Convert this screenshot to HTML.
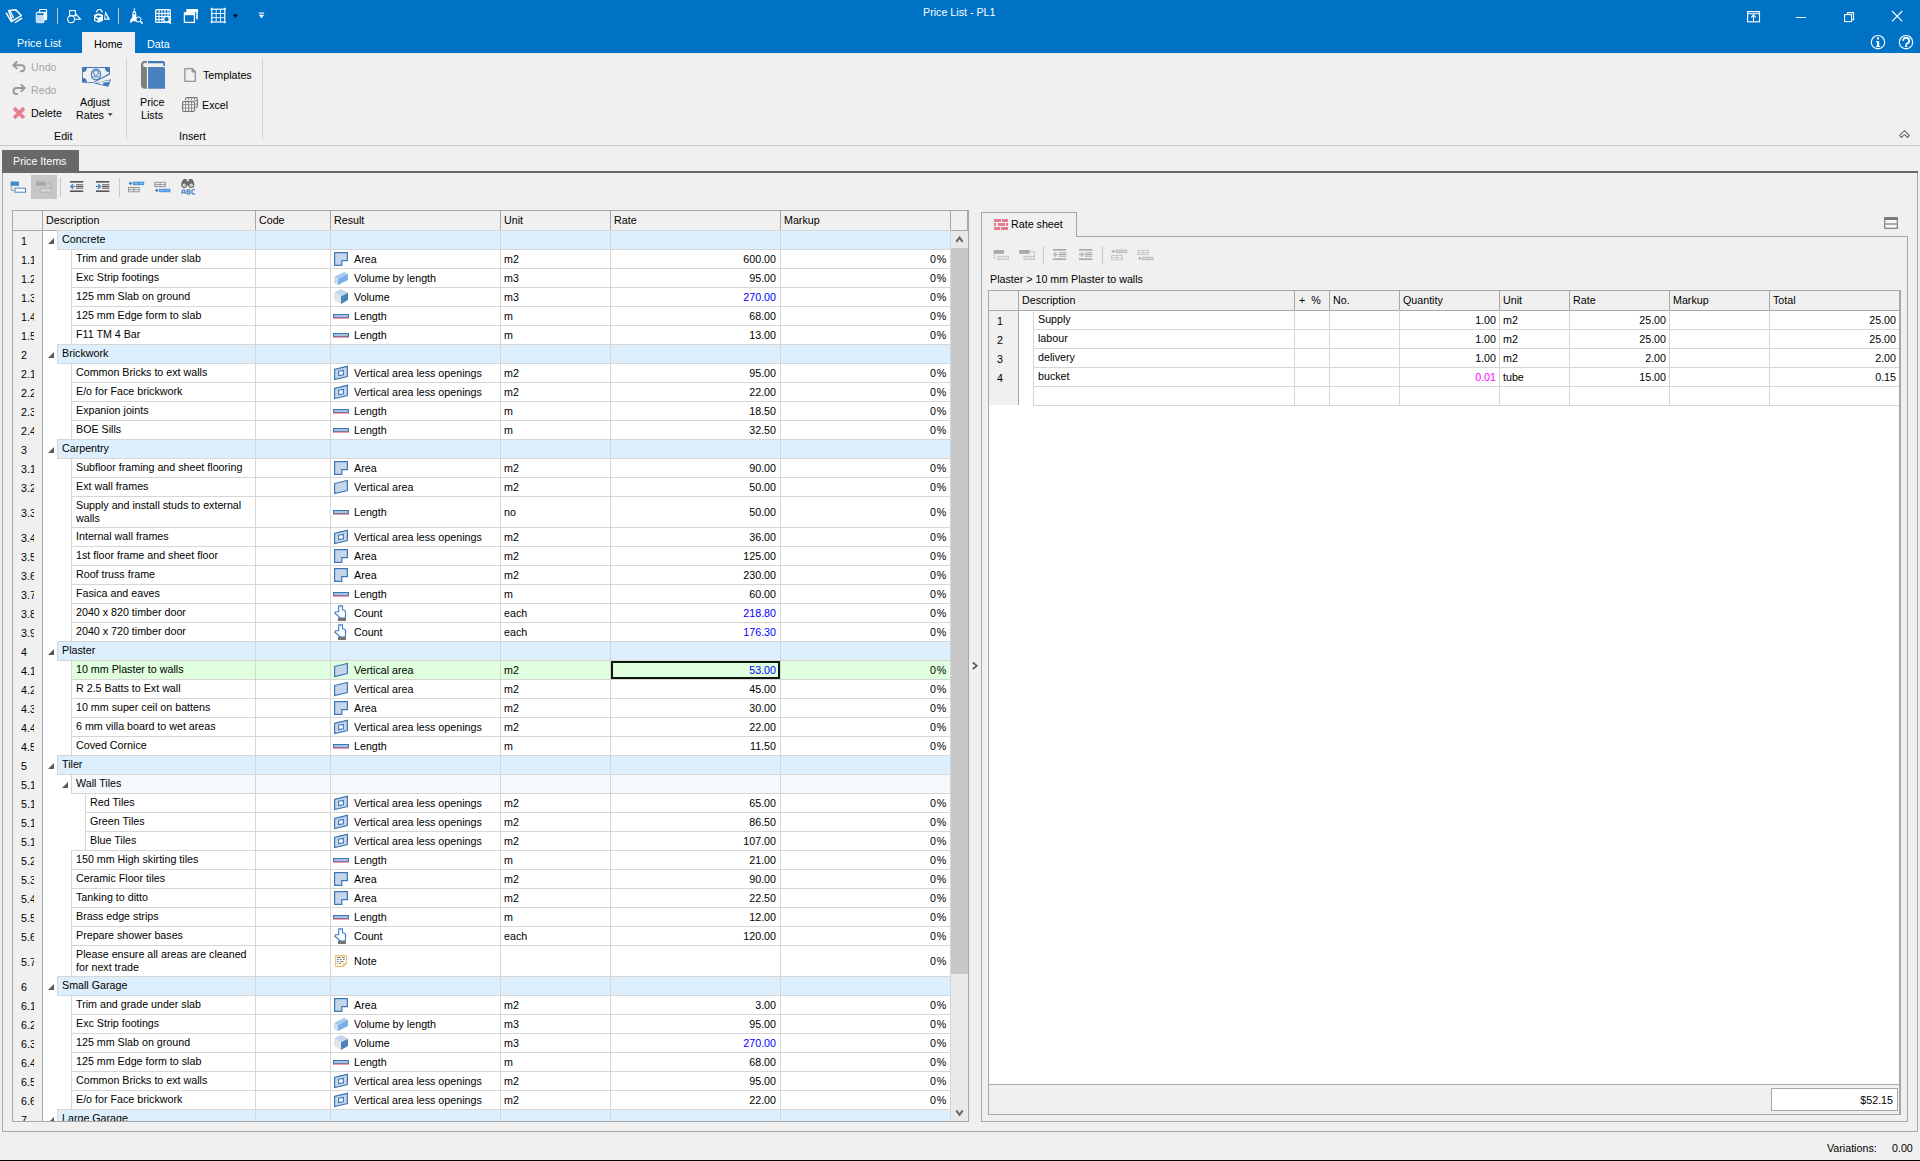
<!DOCTYPE html>
<html><head><meta charset="utf-8"><title>Price List - PL1</title>
<style>
html,body{margin:0;padding:0;}
body{width:1920px;height:1161px;position:relative;overflow:hidden;background:#f0f0f0;font-family:"Liberation Sans", sans-serif;font-size:10.7px;color:#000000;}
svg.bg{position:absolute;left:0;top:0;}
.t{position:absolute;white-space:nowrap;line-height:13px;}
</style></head><body>
<svg class="bg" width="1920" height="1161" viewBox="0 0 1920 1161" shape-rendering="crispEdges">
<rect x="0" y="0" width="1920" height="1161" fill="#f0f0f0" />
<rect x="0" y="0" width="1920" height="53" fill="#0072c6" />
<g shape-rendering="geometricPrecision"><g fill="none" stroke="#fff" stroke-linecap="round" stroke-linejoin="round"><path d="M8.6,10.6 L15.8,9.8 L21.3,15.6 L12.2,21.1 Z" stroke-width="1.5"/><path d="M10.3,11.2 L13.3,17.6" stroke-width="1.3"/><path d="M6.4,13.4 L11.4,21.6" stroke-width="1.5"/><path d="M15.3,22.5 L21.6,18.4" stroke-width="1.4"/></g></g>
<g shape-rendering="geometricPrecision"><rect x="39.6" y="9.5" width="7" height="10.2" rx="0.8" fill="none" stroke="#fff" stroke-width="1.1"/><rect x="36.2" y="12.3" width="7.8" height="10.4" rx="1" fill="#bcdcfa" stroke="#e6f2ff" stroke-width="0.9"/><rect x="36.8" y="13.4" width="6.6" height="1.6" fill="#0a66b8"/><rect x="44" y="11.8" width="2.7" height="8" fill="#fff"/></g>
<rect x="57" y="8" width="1" height="16" fill="#cdc3b6" />
<g shape-rendering="geometricPrecision"><g fill="none" stroke="#fff" stroke-width="1.1"><rect x="69.6" y="10.6" width="5.8" height="5.2"/><circle cx="71.1" cy="19.2" r="3.4"/><path d="M75.5,13.6 L80.5,19.3 L75,19.3"/></g></g>
<g shape-rendering="geometricPrecision"><path d="M96.4,12.4 a2.9,3 0 0 1 5.8,0.2" fill="none" stroke="#fff" stroke-width="1.2"/><path d="M105.3,11 L110.2,19.7 L104,19.7 Z" fill="#fff"/><path d="M105.6,14.3 L107.9,18.4 L105.2,18.4 Z" fill="#0072c6"/><path d="M94,15 L98.5,13.2 L103,15 L103,20.8 L98.5,22.8 L94,20.8 Z" fill="#fff"/><path d="M95.6,16.4 L98.5,15.2 L101.4,16.4 L98.5,17.7 Z M95.3,17.8 L97.6,18.9 V21.3 L95.3,20.2 Z" fill="#0072c6"/></g>
<rect x="118" y="8" width="1" height="16" fill="#cdc3b6" />
<g shape-rendering="geometricPrecision"><path d="M134.3,8 L135.6,9.6 H133 Z" fill="#fff"/><path d="M134.3,10.2 C135.8,11.2 136.3,12.8 136.3,15 V17.5 L137.6,19.5 L137.3,22.8 L135.8,21.2 H132.8 L131.2,22.8 L129.8,22.5 L130.6,19.3 L132.3,17.5 V15 C132.3,12.8 132.8,11.2 134.3,10.2 Z" fill="#fff"/><circle cx="134.3" cy="13.4" r="0.9" fill="#0072c6"/><circle cx="138.5" cy="19.4" r="2.5" fill="#0072c6" stroke="#fff" stroke-width="1"/><path d="M140.3,21.3 L142.6,23.6" stroke="#fff" stroke-width="1.5"/></g>
<g shape-rendering="geometricPrecision"><rect x="155.7" y="9.6" width="14.6" height="12.8" rx="1" fill="none" stroke="#fff" stroke-width="1.3"/><path d="M155.7,13.5 H170.3 M155.7,16.5 H170.3 M155.7,19.5 H165 M159,10 V22.4 M162,10 V22.4 M165,10 V22.4 M168,10 V16.5" stroke="#fff" stroke-width="1.1" fill="none"/><circle cx="166.5" cy="19.2" r="2.8" fill="#0072c6" stroke="#fff" stroke-width="1.2"/><path d="M168.5,21.3 L170.8,23.7" stroke="#fff" stroke-width="1.4"/></g>
<g shape-rendering="geometricPrecision"><rect x="186.3" y="9" width="11.5" height="3.2" fill="#fff"/><rect x="196.2" y="9" width="1.6" height="10.4" fill="#fff"/><rect x="184.4" y="12.8" width="10" height="9.6" fill="none" stroke="#fff" stroke-width="1.3"/><rect x="184.4" y="12.8" width="10" height="2.4" fill="#fff"/></g>
<g shape-rendering="geometricPrecision"><g stroke="#fff" fill="none" stroke-width="1.2"><rect x="211.8" y="9.2" width="13" height="12.8"/><path d="M216.2,9.2 V22 M220.5,9.2 V22 M211.8,13.5 H224.8 M211.8,17.7 H224.8" stroke-width="0.9"/><path d="M211.8,7.8 V9.2 M224.8,7.8 V9.2 M211.8,22 V23.3 M224.8,22 V23.3 M210.5,9.2 H211.8 M224.8,9.2 H226 M210.5,22 H211.8 M224.8,22 H226"/></g></g>
<g shape-rendering="geometricPrecision"><path d="M232.8,14.6 L238,14.6 L235.4,17.8 Z" fill="#000"/></g>
<g shape-rendering="geometricPrecision"><rect x="258.8" y="12.5" width="5.4" height="1.1" fill="#fff"/><path d="M258.8,14.8 L264.2,14.8 L261.5,18.2 Z" fill="#fff"/></g>
<g shape-rendering="geometricPrecision"><rect x="1747.6" y="11.6" width="11.9" height="10.2" fill="none" stroke="#fff" stroke-width="1.15"/><path d="M1747.6,13.7 H1759.5" stroke="#fff" stroke-width="1"/><path d="M1753.5,21.8 V14.8 M1751.2,17.3 L1753.5,14.9 L1755.8,17.3" fill="none" stroke="#fff" stroke-width="1.1"/></g>
<rect x="1796" y="17" width="10" height="1" fill="#fff" />
<g shape-rendering="geometricPrecision"><path d="M1847.6,14 V12.6 H1853.6 V19.6 H1852" fill="none" stroke="#fff" stroke-width="1.05"/><rect x="1844.6" y="14.6" width="7" height="7" fill="none" stroke="#fff" stroke-width="1.05"/></g>
<g shape-rendering="geometricPrecision"><path d="M1892,11 L1902.3,21.3 M1902.3,11 L1892,21.3" stroke="#fff" stroke-width="1.1"/></g>
<g shape-rendering="geometricPrecision"><circle cx="1878" cy="42.2" r="6.7" fill="none" stroke="#fff" stroke-width="1.2"/><circle cx="1878" cy="38.5" r="1.15" fill="#fff"/><rect x="1877" y="41.2" width="2.2" height="5.6" fill="#fff"/><rect x="1876" y="41.2" width="1.5" height="1.1" fill="#fff"/><rect x="1876" y="46" width="4.2" height="1.1" fill="#fff"/></g>
<g shape-rendering="geometricPrecision"><circle cx="1906" cy="42.2" r="6.7" fill="none" stroke="#fff" stroke-width="1.2"/><path d="M1903,40.8 a3.1,3 0 1 1 5.4,2 c-0.9,0.7 -2.3,1 -2.3,2" fill="none" stroke="#fff" stroke-width="1.9"/><rect x="1905" y="45.3" width="2.1" height="1.7" fill="#fff"/></g>
<rect x="82" y="32" width="53" height="21" fill="#f0f0f0" />
<g shape-rendering="geometricPrecision"><path d="M14,65.2 H21.5 a3,3 0 0 1 0,6 H20" fill="none" stroke="#9a9a9a" stroke-width="1.9"/><path d="M17.2,61.5 L13.3,65.2 L17.2,68.9" fill="none" stroke="#9a9a9a" stroke-width="1.9"/></g>
<g shape-rendering="geometricPrecision"><path d="M24,88 H16.5 a3,3 0 0 0 0,6 H18" fill="none" stroke="#9a9a9a" stroke-width="1.9"/><path d="M20.8,84.3 L24.7,88 L20.8,91.7" fill="none" stroke="#9a9a9a" stroke-width="1.9"/></g>
<g shape-rendering="geometricPrecision"><path d="M14,108.2 L24,118 M24,108.2 L14,118" stroke="#e5818f" stroke-width="3.8"/></g>
<g shape-rendering="geometricPrecision"><path d="M82.8,67 H109.2 a0.8,0.8 0 0 1 0.8,0.8 V74.4 L93.9,82.8 H82.8 a0.8,0.8 0 0 1 -0.8,-0.8 V67.8 a0.8,0.8 0 0 1 0.8,-0.8 Z" fill="#4079ba"/><path d="M86.9,68.1 H105 A4,4 0 0 0 109,72.1 V73.6 L93.6,81.9 H86.9 A4,4 0 0 0 82.9,77.9 V72.1 A4,4 0 0 0 86.9,68.1 Z" fill="#f0f0f0"/><ellipse cx="96" cy="74.5" rx="4.6" ry="5.4" fill="none" stroke="#4079ba" stroke-width="1.2"/><circle cx="96" cy="73" r="2.4" fill="none" stroke="#4079ba" stroke-width="1"/><path d="M93.4,76.3 Q96,78.3 98.6,76.3" fill="none" stroke="#4079ba" stroke-width="1"/><path d="M93.8,83.6 L111,79.2 L108.4,86.8 Z" fill="#4079ba"/><path d="M96.8,83.1 L109.6,80.3 L109.1,82 L103.8,82.6 L102.4,84.7 Z" fill="#f0f0f0"/></g>
<g shape-rendering="geometricPrecision"><path d="M108,113.3 L112.6,113.3 L110.3,116 Z" fill="#333"/></g>
<rect x="126" y="59" width="1" height="80" fill="#d0d0d0" />
<g shape-rendering="geometricPrecision"><path d="M146.9,61 H145 a4,4 0 0 0 -4,4 V84.7 a4,4 0 0 0 4,4 H146.9 Z" fill="#7f7f7f"/><path d="M147,63.1 H145 a2,2 0 0 0 0,4 H147 Z" fill="#f0f0f0"/><path d="M148.1,61 H162.5 a2.5,2.5 0 0 1 2.5,2.5 V66 H163.3 V63.2 H148.1 Z" fill="#3f77b8"/><path d="M148.1,67 H163.5 a1.5,1.5 0 0 1 1.5,1.5 V88.8 H148.1 Z" fill="#4a80bd"/></g>
<g shape-rendering="geometricPrecision"><path d="M184.9,68.8 H192.4 L195.3,71.7 V81.3 H184.9 Z" fill="#f0f0f0" stroke="#7a7a7a" stroke-width="1.05"/><path d="M192.2,68.8 V71.9 H195.3" fill="none" stroke="#7a7a7a" stroke-width="1"/></g>
<g shape-rendering="geometricPrecision"><rect x="185.7" y="97.7" width="11.6" height="9.6" rx="1.3" fill="#fff" stroke="#7a7a7a" stroke-width="1.25"/><path d="M188.7,97.7 V107.3 M191.6,97.7 V107.3 M194.5,97.7 V107.3 M185.7,100.9 H197.3 M185.7,104.1 H197.3" stroke="#7a7a7a" stroke-width="0.9"/><rect x="182.6" y="101.6" width="12" height="9.7" rx="1.3" fill="#fff" stroke="#f0f0f0" stroke-width="2.6"/><rect x="182.6" y="101.6" width="12" height="9.7" rx="1.3" fill="#fff" stroke="#7a7a7a" stroke-width="1.25"/><path d="M185.6,101.6 V111.3 M188.6,101.6 V111.3 M191.6,101.6 V111.3 M182.6,104.8 H194.6 M182.6,108 H194.6" stroke="#7a7a7a" stroke-width="0.9"/></g>
<rect x="262" y="59" width="1" height="80" fill="#d0d0d0" />
<g shape-rendering="geometricPrecision"><path d="M1904.5,130.7 L1909.3,135.5 L1907.5,137.3 L1904.5,134.3 L1901.5,137.3 L1899.7,135.5 Z" fill="#fff" stroke="#6a6a6a" stroke-width="1.1" stroke-linejoin="round"/></g>
<rect x="0" y="145" width="1920" height="1" fill="#c8c8c8" />
<rect x="2" y="150" width="77" height="21" fill="#686868" />
<rect x="2" y="171" width="1916" height="2" fill="#686868" />
<rect x="2" y="173" width="1" height="959" fill="#a8a8a8" />
<rect x="1917" y="173" width="1" height="959" fill="#a8a8a8" />
<rect x="2" y="1131" width="1916" height="1" fill="#a8a8a8" />
<rect x="31" y="175" width="26" height="24" fill="#c6c6c6" />
<g shape-rendering="geometricPrecision"><rect x="10.5" y="181.5" width="8.5" height="4.3" fill="#4a86c8"/><path d="M11.3,185.8 V190.3 H14.5" fill="none" stroke="#8c8c8c" stroke-width="0.9"/><rect x="15" y="188.2" width="10.5" height="4" fill="#fff" stroke="#4a86c8" stroke-width="1"/></g>
<g shape-rendering="geometricPrecision"><rect x="36" y="181.5" width="9.5" height="4.3" fill="#a8a8a8"/><path d="M45.5,183.6 H51 V188" fill="none" stroke="#b4b4b4" stroke-width="0.9"/><rect x="40.3" y="188.5" width="10.8" height="3.7" fill="#d5d5d5" stroke="#b4b4b4" stroke-width="1"/></g>
<rect x="60" y="178" width="1" height="19" fill="#c8c8c8" />
<g shape-rendering="geometricPrecision"><rect x="70" y="181" width="13.3" height="1.6" fill="#565656"/><rect x="70" y="190.4" width="13.3" height="1.6" fill="#565656"/><path d="M76,184.8 H83.3 M76,186.5 H83.3 M76,188.2 H83.3" stroke="#565656" stroke-width="1"/><path d="M75.3,186.5 H70.8 M73,184.3 L70.8,186.5 L73,188.7" fill="none" stroke="#4a86c8" stroke-width="1.3"/></g>
<g shape-rendering="geometricPrecision"><rect x="96" y="181" width="13.3" height="1.6" fill="#565656"/><rect x="96" y="190.4" width="13.3" height="1.6" fill="#565656"/><path d="M102,184.8 H109.3 M102,186.5 H109.3 M102,188.2 H109.3" stroke="#565656" stroke-width="1"/><path d="M96,186.5 H100.5 M98.3,184.3 L100.5,186.5 L98.3,188.7" fill="none" stroke="#4a86c8" stroke-width="1.3"/></g>
<rect x="119" y="178" width="1" height="19" fill="#c8c8c8" />
<g shape-rendering="geometricPrecision"><path d="M128.8,183.4 H132 M130.4,181.8 V185" stroke="#3d7fc8" stroke-width="1.3"/><rect x="133.2" y="182.1" width="10.6" height="2.6" fill="#6cb6f5" stroke="#3d7fc8" stroke-width="0.8"/><path d="M138.5,182.1 V184.7" stroke="#3d7fc8" stroke-width="0.6"/><rect x="128.6" y="187.4" width="10.6" height="4.4" fill="none" stroke="#8c8c8c" stroke-width="0.9"/><path d="M128.6,189.6 H139.2 M133.9,187.4 V191.8" stroke="#8c8c8c" stroke-width="0.8"/></g>
<g shape-rendering="geometricPrecision"><rect x="154.9" y="182.3" width="10.4" height="4.3" fill="none" stroke="#8c8c8c" stroke-width="0.9"/><path d="M154.9,184.5 H165.3 M160.1,182.3 V186.6" stroke="#8c8c8c" stroke-width="0.8"/><path d="M155.2,190.4 H158.4 M156.8,188.8 V192" stroke="#3d7fc8" stroke-width="1.3"/><rect x="159.6" y="189.2" width="10.3" height="2.6" fill="#6cb6f5" stroke="#3d7fc8" stroke-width="0.8"/><path d="M164.8,189.2 V191.8" stroke="#3d7fc8" stroke-width="0.6"/></g>
<g shape-rendering="geometricPrecision"><path d="M181.3,185.5 C181.3,182.3 182.3,179.6 184.2,179 H186.8 V181.2 H188.8 V179 H191.4 C193.3,179.6 194.3,182.3 194.3,185.5" fill="#6a6a6a"/><circle cx="184.2" cy="185" r="2.9" fill="#6a6a6a"/><circle cx="191.3" cy="185" r="2.9" fill="#6a6a6a"/><circle cx="184.2" cy="185.2" r="1.6" fill="#e6e6e6"/><circle cx="191.3" cy="185.2" r="1.6" fill="#e6e6e6"/><path d="M184.9,184.6 L183.9,185.6 M192,184.6 L191,185.6" stroke="#6a6a6a" stroke-width="0.7"/></g>
<g shape-rendering="geometricPrecision"><g fill="none" stroke="#3d78c0" stroke-width="1.1" stroke-linejoin="miter"><path d="M182.1,194 V191 L183.3,189.7 H184.1 L185.1,191 V194 M182.1,192.3 H185.1"/><path d="M187.1,194 V189.7 H189.2 L189.9,190.3 V191.1 L189.2,191.8 H187.1 M189.2,191.8 L190.1,192.5 V193.3 L189.4,193.9 H187.1"/><path d="M195,189.7 H192.8 L191.9,190.6 V193 L192.8,193.9 H195"/></g></g>
<rect x="12" y="210" width="956" height="911" fill="#ffffff" />
<rect x="12" y="210" width="956" height="20" fill="#f0f0f0" />
<rect x="12" y="210" width="957" height="1" fill="#a8a8a8" />
<rect x="12" y="230" width="957" height="1" fill="#a8a8a8" />
<rect x="42" y="210" width="1" height="20" fill="#a8a8a8" />
<rect x="255" y="210" width="1" height="20" fill="#a8a8a8" />
<rect x="330" y="210" width="1" height="20" fill="#a8a8a8" />
<rect x="500" y="210" width="1" height="20" fill="#a8a8a8" />
<rect x="610" y="210" width="1" height="20" fill="#a8a8a8" />
<rect x="780" y="210" width="1" height="20" fill="#a8a8a8" />
<rect x="950" y="210" width="1" height="20" fill="#a8a8a8" />
<rect x="13" y="231" width="29" height="890" fill="#f0f0f0" />
<rect x="42" y="230" width="1" height="891" fill="#a8a8a8" />
<rect x="57" y="230" width="893" height="19" fill="#ddeffc" />
<rect x="57" y="230" width="893" height="1" fill="#d6d6d6" />
<rect x="57" y="249" width="893" height="1" fill="#d6d6d6" />
<rect x="57" y="230" width="1" height="19" fill="#d6d6d6" />
<rect x="71" y="249" width="879" height="19" fill="#ffffff" />
<rect x="71" y="249" width="879" height="1" fill="#d6d6d6" />
<rect x="71" y="268" width="879" height="1" fill="#d6d6d6" />
<rect x="71" y="249" width="1" height="19" fill="#d6d6d6" />
<g shape-rendering="geometricPrecision"><path d="M334.6,252.6 H347.4 V260.6 H341.8 V265.4 H334.6 Z" fill="#c5d6ea" stroke="#3d78b6" stroke-width="1.2"/></g>
<rect x="71" y="268" width="879" height="19" fill="#ffffff" />
<rect x="71" y="268" width="879" height="1" fill="#d6d6d6" />
<rect x="71" y="287" width="879" height="1" fill="#d6d6d6" />
<rect x="71" y="268" width="1" height="19" fill="#d6d6d6" />
<g shape-rendering="geometricPrecision"><path d="M334,277 L344,272 L348,274 L338,279 Z" fill="#a9c9ec"/><path d="M334,277 L338,279 L338,285 L334,283 Z" fill="#c8dcf2"/><path d="M338,279 L348,274 L348,280 L338,285 Z" fill="#79ade5"/></g>
<rect x="71" y="287" width="879" height="19" fill="#ffffff" />
<rect x="71" y="287" width="879" height="1" fill="#d6d6d6" />
<rect x="71" y="306" width="879" height="1" fill="#d6d6d6" />
<rect x="71" y="287" width="1" height="19" fill="#d6d6d6" />
<g shape-rendering="geometricPrecision"><path d="M334,292.5 L341,289 L348,292.8 L341,296.3 Z" fill="#c3d6ec"/><path d="M334,292.5 L341,296.3 L341,304 L334,300 Z" fill="#e1e4e9"/><path d="M341,296.3 L348,292.8 L348,300 L341,304 Z" fill="#4a82be"/></g>
<rect x="71" y="306" width="879" height="19" fill="#ffffff" />
<rect x="71" y="306" width="879" height="1" fill="#d6d6d6" />
<rect x="71" y="325" width="879" height="1" fill="#d6d6d6" />
<rect x="71" y="306" width="1" height="19" fill="#d6d6d6" />
<g shape-rendering="geometricPrecision"><rect x="333.6" y="314.6" width="14.8" height="2.8" fill="#c5d6ea" stroke="#3d78b6" stroke-width="1.2"/><rect x="333" y="317.6" width="16" height="1.1" fill="#e8737f"/></g>
<rect x="71" y="325" width="879" height="19" fill="#ffffff" />
<rect x="71" y="325" width="879" height="1" fill="#d6d6d6" />
<rect x="71" y="344" width="879" height="1" fill="#d6d6d6" />
<rect x="71" y="325" width="1" height="19" fill="#d6d6d6" />
<g shape-rendering="geometricPrecision"><rect x="333.6" y="333.6" width="14.8" height="2.8" fill="#c5d6ea" stroke="#3d78b6" stroke-width="1.2"/><rect x="333" y="336.6" width="16" height="1.1" fill="#e8737f"/></g>
<rect x="57" y="344" width="893" height="19" fill="#ddeffc" />
<rect x="57" y="344" width="893" height="1" fill="#d6d6d6" />
<rect x="57" y="363" width="893" height="1" fill="#d6d6d6" />
<rect x="57" y="344" width="1" height="19" fill="#d6d6d6" />
<rect x="71" y="363" width="879" height="19" fill="#ffffff" />
<rect x="71" y="363" width="879" height="1" fill="#d6d6d6" />
<rect x="71" y="382" width="879" height="1" fill="#d6d6d6" />
<rect x="71" y="363" width="1" height="19" fill="#d6d6d6" />
<g shape-rendering="geometricPrecision"><path d="M334.6,369.3 L347.4,366.3 V376.5 L334.6,379.5 Z" fill="#c5d6ea" stroke="#3d78b6" stroke-width="1.2"/><path d="M338.6,371.2 L343.4,370.5 V374.8 L338.6,375.5 Z" fill="#fff" stroke="#3d78b6" stroke-width="1.1"/></g>
<rect x="71" y="382" width="879" height="19" fill="#ffffff" />
<rect x="71" y="382" width="879" height="1" fill="#d6d6d6" />
<rect x="71" y="401" width="879" height="1" fill="#d6d6d6" />
<rect x="71" y="382" width="1" height="19" fill="#d6d6d6" />
<g shape-rendering="geometricPrecision"><path d="M334.6,388.3 L347.4,385.3 V395.5 L334.6,398.5 Z" fill="#c5d6ea" stroke="#3d78b6" stroke-width="1.2"/><path d="M338.6,390.2 L343.4,389.5 V393.8 L338.6,394.5 Z" fill="#fff" stroke="#3d78b6" stroke-width="1.1"/></g>
<rect x="71" y="401" width="879" height="19" fill="#ffffff" />
<rect x="71" y="401" width="879" height="1" fill="#d6d6d6" />
<rect x="71" y="420" width="879" height="1" fill="#d6d6d6" />
<rect x="71" y="401" width="1" height="19" fill="#d6d6d6" />
<g shape-rendering="geometricPrecision"><rect x="333.6" y="409.6" width="14.8" height="2.8" fill="#c5d6ea" stroke="#3d78b6" stroke-width="1.2"/><rect x="333" y="412.6" width="16" height="1.1" fill="#e8737f"/></g>
<rect x="71" y="420" width="879" height="19" fill="#ffffff" />
<rect x="71" y="420" width="879" height="1" fill="#d6d6d6" />
<rect x="71" y="439" width="879" height="1" fill="#d6d6d6" />
<rect x="71" y="420" width="1" height="19" fill="#d6d6d6" />
<g shape-rendering="geometricPrecision"><rect x="333.6" y="428.6" width="14.8" height="2.8" fill="#c5d6ea" stroke="#3d78b6" stroke-width="1.2"/><rect x="333" y="431.6" width="16" height="1.1" fill="#e8737f"/></g>
<rect x="57" y="439" width="893" height="19" fill="#ddeffc" />
<rect x="57" y="439" width="893" height="1" fill="#d6d6d6" />
<rect x="57" y="458" width="893" height="1" fill="#d6d6d6" />
<rect x="57" y="439" width="1" height="19" fill="#d6d6d6" />
<rect x="71" y="458" width="879" height="19" fill="#ffffff" />
<rect x="71" y="458" width="879" height="1" fill="#d6d6d6" />
<rect x="71" y="477" width="879" height="1" fill="#d6d6d6" />
<rect x="71" y="458" width="1" height="19" fill="#d6d6d6" />
<g shape-rendering="geometricPrecision"><path d="M334.6,461.6 H347.4 V469.6 H341.8 V474.4 H334.6 Z" fill="#c5d6ea" stroke="#3d78b6" stroke-width="1.2"/></g>
<rect x="71" y="477" width="879" height="19" fill="#ffffff" />
<rect x="71" y="477" width="879" height="1" fill="#d6d6d6" />
<rect x="71" y="496" width="879" height="1" fill="#d6d6d6" />
<rect x="71" y="477" width="1" height="19" fill="#d6d6d6" />
<g shape-rendering="geometricPrecision"><path d="M334.6,483.5 L347.4,480.5 V490.5 L334.6,493.5 Z" fill="#c5d6ea" stroke="#3d78b6" stroke-width="1.2"/></g>
<rect x="71" y="496" width="879" height="31" fill="#ffffff" />
<rect x="71" y="496" width="879" height="1" fill="#d6d6d6" />
<rect x="71" y="527" width="879" height="1" fill="#d6d6d6" />
<rect x="71" y="496" width="1" height="31" fill="#d6d6d6" />
<g shape-rendering="geometricPrecision"><rect x="333.6" y="510.6" width="14.8" height="2.8" fill="#c5d6ea" stroke="#3d78b6" stroke-width="1.2"/><rect x="333" y="513.6" width="16" height="1.1" fill="#e8737f"/></g>
<rect x="71" y="527" width="879" height="19" fill="#ffffff" />
<rect x="71" y="527" width="879" height="1" fill="#d6d6d6" />
<rect x="71" y="546" width="879" height="1" fill="#d6d6d6" />
<rect x="71" y="527" width="1" height="19" fill="#d6d6d6" />
<g shape-rendering="geometricPrecision"><path d="M334.6,533.3 L347.4,530.3 V540.5 L334.6,543.5 Z" fill="#c5d6ea" stroke="#3d78b6" stroke-width="1.2"/><path d="M338.6,535.2 L343.4,534.5 V538.8 L338.6,539.5 Z" fill="#fff" stroke="#3d78b6" stroke-width="1.1"/></g>
<rect x="71" y="546" width="879" height="19" fill="#ffffff" />
<rect x="71" y="546" width="879" height="1" fill="#d6d6d6" />
<rect x="71" y="565" width="879" height="1" fill="#d6d6d6" />
<rect x="71" y="546" width="1" height="19" fill="#d6d6d6" />
<g shape-rendering="geometricPrecision"><path d="M334.6,549.6 H347.4 V557.6 H341.8 V562.4 H334.6 Z" fill="#c5d6ea" stroke="#3d78b6" stroke-width="1.2"/></g>
<rect x="71" y="565" width="879" height="19" fill="#ffffff" />
<rect x="71" y="565" width="879" height="1" fill="#d6d6d6" />
<rect x="71" y="584" width="879" height="1" fill="#d6d6d6" />
<rect x="71" y="565" width="1" height="19" fill="#d6d6d6" />
<g shape-rendering="geometricPrecision"><path d="M334.6,568.6 H347.4 V576.6 H341.8 V581.4 H334.6 Z" fill="#c5d6ea" stroke="#3d78b6" stroke-width="1.2"/></g>
<rect x="71" y="584" width="879" height="19" fill="#ffffff" />
<rect x="71" y="584" width="879" height="1" fill="#d6d6d6" />
<rect x="71" y="603" width="879" height="1" fill="#d6d6d6" />
<rect x="71" y="584" width="1" height="19" fill="#d6d6d6" />
<g shape-rendering="geometricPrecision"><rect x="333.6" y="592.6" width="14.8" height="2.8" fill="#c5d6ea" stroke="#3d78b6" stroke-width="1.2"/><rect x="333" y="595.6" width="16" height="1.1" fill="#e8737f"/></g>
<rect x="71" y="603" width="879" height="19" fill="#ffffff" />
<rect x="71" y="603" width="879" height="1" fill="#d6d6d6" />
<rect x="71" y="622" width="879" height="1" fill="#d6d6d6" />
<rect x="71" y="603" width="1" height="19" fill="#d6d6d6" />
<g shape-rendering="geometricPrecision"><path d="M338.7,605.7 H342.5 V609.8 L344.6,610.2 L345.5,611.6 V616.6 L344.6,618 H340 L337.3,615.2 L334.7,613 L335.7,611.7 H338.7 Z" fill="#fff" stroke="#3b7dc9" stroke-width="1.15" stroke-linejoin="round"/><path d="M340.6,606 V607.2" stroke="#3b7dc9" stroke-width="0.9"/></g>
<rect x="338" y="618" width="8" height="3" fill="#767676" />
<rect x="71" y="622" width="879" height="19" fill="#ffffff" />
<rect x="71" y="622" width="879" height="1" fill="#d6d6d6" />
<rect x="71" y="641" width="879" height="1" fill="#d6d6d6" />
<rect x="71" y="622" width="1" height="19" fill="#d6d6d6" />
<g shape-rendering="geometricPrecision"><path d="M338.7,624.7 H342.5 V628.8 L344.6,629.2 L345.5,630.6 V635.6 L344.6,637 H340 L337.3,634.2 L334.7,632 L335.7,630.7 H338.7 Z" fill="#fff" stroke="#3b7dc9" stroke-width="1.15" stroke-linejoin="round"/><path d="M340.6,625 V626.2" stroke="#3b7dc9" stroke-width="0.9"/></g>
<rect x="338" y="637" width="8" height="3" fill="#767676" />
<rect x="57" y="641" width="893" height="19" fill="#ddeffc" />
<rect x="57" y="641" width="893" height="1" fill="#d6d6d6" />
<rect x="57" y="660" width="893" height="1" fill="#d6d6d6" />
<rect x="57" y="641" width="1" height="19" fill="#d6d6d6" />
<rect x="71" y="660" width="879" height="19" fill="#dfffdf" />
<rect x="71" y="660" width="879" height="1" fill="#d6d6d6" />
<rect x="71" y="679" width="879" height="1" fill="#d6d6d6" />
<rect x="71" y="660" width="1" height="19" fill="#d6d6d6" />
<g shape-rendering="geometricPrecision"><path d="M334.6,666.5 L347.4,663.5 V673.5 L334.6,676.5 Z" fill="#c5d6ea" stroke="#3d78b6" stroke-width="1.2"/></g>
<rect x="612" y="662" width="167" height="16" fill="none" stroke="#0c160c" stroke-width="2"/>
<rect x="71" y="679" width="879" height="19" fill="#ffffff" />
<rect x="71" y="679" width="879" height="1" fill="#d6d6d6" />
<rect x="71" y="698" width="879" height="1" fill="#d6d6d6" />
<rect x="71" y="679" width="1" height="19" fill="#d6d6d6" />
<g shape-rendering="geometricPrecision"><path d="M334.6,685.5 L347.4,682.5 V692.5 L334.6,695.5 Z" fill="#c5d6ea" stroke="#3d78b6" stroke-width="1.2"/></g>
<rect x="71" y="698" width="879" height="19" fill="#ffffff" />
<rect x="71" y="698" width="879" height="1" fill="#d6d6d6" />
<rect x="71" y="717" width="879" height="1" fill="#d6d6d6" />
<rect x="71" y="698" width="1" height="19" fill="#d6d6d6" />
<g shape-rendering="geometricPrecision"><path d="M334.6,701.6 H347.4 V709.6 H341.8 V714.4 H334.6 Z" fill="#c5d6ea" stroke="#3d78b6" stroke-width="1.2"/></g>
<rect x="71" y="717" width="879" height="19" fill="#ffffff" />
<rect x="71" y="717" width="879" height="1" fill="#d6d6d6" />
<rect x="71" y="736" width="879" height="1" fill="#d6d6d6" />
<rect x="71" y="717" width="1" height="19" fill="#d6d6d6" />
<g shape-rendering="geometricPrecision"><path d="M334.6,723.3 L347.4,720.3 V730.5 L334.6,733.5 Z" fill="#c5d6ea" stroke="#3d78b6" stroke-width="1.2"/><path d="M338.6,725.2 L343.4,724.5 V728.8 L338.6,729.5 Z" fill="#fff" stroke="#3d78b6" stroke-width="1.1"/></g>
<rect x="71" y="736" width="879" height="19" fill="#ffffff" />
<rect x="71" y="736" width="879" height="1" fill="#d6d6d6" />
<rect x="71" y="755" width="879" height="1" fill="#d6d6d6" />
<rect x="71" y="736" width="1" height="19" fill="#d6d6d6" />
<g shape-rendering="geometricPrecision"><rect x="333.6" y="744.6" width="14.8" height="2.8" fill="#c5d6ea" stroke="#3d78b6" stroke-width="1.2"/><rect x="333" y="747.6" width="16" height="1.1" fill="#e8737f"/></g>
<rect x="57" y="755" width="893" height="19" fill="#ddeffc" />
<rect x="57" y="755" width="893" height="1" fill="#d6d6d6" />
<rect x="57" y="774" width="893" height="1" fill="#d6d6d6" />
<rect x="57" y="755" width="1" height="19" fill="#d6d6d6" />
<rect x="71" y="774" width="879" height="19" fill="#f4f9fe" />
<rect x="71" y="774" width="879" height="1" fill="#d6d6d6" />
<rect x="71" y="793" width="879" height="1" fill="#d6d6d6" />
<rect x="71" y="774" width="1" height="19" fill="#d6d6d6" />
<rect x="85" y="793" width="865" height="19" fill="#ffffff" />
<rect x="85" y="793" width="865" height="1" fill="#d6d6d6" />
<rect x="85" y="812" width="865" height="1" fill="#d6d6d6" />
<rect x="85" y="793" width="1" height="19" fill="#d6d6d6" />
<g shape-rendering="geometricPrecision"><path d="M334.6,799.3 L347.4,796.3 V806.5 L334.6,809.5 Z" fill="#c5d6ea" stroke="#3d78b6" stroke-width="1.2"/><path d="M338.6,801.2 L343.4,800.5 V804.8 L338.6,805.5 Z" fill="#fff" stroke="#3d78b6" stroke-width="1.1"/></g>
<rect x="85" y="812" width="865" height="19" fill="#ffffff" />
<rect x="85" y="812" width="865" height="1" fill="#d6d6d6" />
<rect x="85" y="831" width="865" height="1" fill="#d6d6d6" />
<rect x="85" y="812" width="1" height="19" fill="#d6d6d6" />
<g shape-rendering="geometricPrecision"><path d="M334.6,818.3 L347.4,815.3 V825.5 L334.6,828.5 Z" fill="#c5d6ea" stroke="#3d78b6" stroke-width="1.2"/><path d="M338.6,820.2 L343.4,819.5 V823.8 L338.6,824.5 Z" fill="#fff" stroke="#3d78b6" stroke-width="1.1"/></g>
<rect x="85" y="831" width="865" height="19" fill="#ffffff" />
<rect x="85" y="831" width="865" height="1" fill="#d6d6d6" />
<rect x="85" y="850" width="865" height="1" fill="#d6d6d6" />
<rect x="85" y="831" width="1" height="19" fill="#d6d6d6" />
<g shape-rendering="geometricPrecision"><path d="M334.6,837.3 L347.4,834.3 V844.5 L334.6,847.5 Z" fill="#c5d6ea" stroke="#3d78b6" stroke-width="1.2"/><path d="M338.6,839.2 L343.4,838.5 V842.8 L338.6,843.5 Z" fill="#fff" stroke="#3d78b6" stroke-width="1.1"/></g>
<rect x="71" y="850" width="879" height="19" fill="#ffffff" />
<rect x="71" y="850" width="879" height="1" fill="#d6d6d6" />
<rect x="71" y="869" width="879" height="1" fill="#d6d6d6" />
<rect x="71" y="850" width="1" height="19" fill="#d6d6d6" />
<g shape-rendering="geometricPrecision"><rect x="333.6" y="858.6" width="14.8" height="2.8" fill="#c5d6ea" stroke="#3d78b6" stroke-width="1.2"/><rect x="333" y="861.6" width="16" height="1.1" fill="#e8737f"/></g>
<rect x="71" y="869" width="879" height="19" fill="#ffffff" />
<rect x="71" y="869" width="879" height="1" fill="#d6d6d6" />
<rect x="71" y="888" width="879" height="1" fill="#d6d6d6" />
<rect x="71" y="869" width="1" height="19" fill="#d6d6d6" />
<g shape-rendering="geometricPrecision"><path d="M334.6,872.6 H347.4 V880.6 H341.8 V885.4 H334.6 Z" fill="#c5d6ea" stroke="#3d78b6" stroke-width="1.2"/></g>
<rect x="71" y="888" width="879" height="19" fill="#ffffff" />
<rect x="71" y="888" width="879" height="1" fill="#d6d6d6" />
<rect x="71" y="907" width="879" height="1" fill="#d6d6d6" />
<rect x="71" y="888" width="1" height="19" fill="#d6d6d6" />
<g shape-rendering="geometricPrecision"><path d="M334.6,891.6 H347.4 V899.6 H341.8 V904.4 H334.6 Z" fill="#c5d6ea" stroke="#3d78b6" stroke-width="1.2"/></g>
<rect x="71" y="907" width="879" height="19" fill="#ffffff" />
<rect x="71" y="907" width="879" height="1" fill="#d6d6d6" />
<rect x="71" y="926" width="879" height="1" fill="#d6d6d6" />
<rect x="71" y="907" width="1" height="19" fill="#d6d6d6" />
<g shape-rendering="geometricPrecision"><rect x="333.6" y="915.6" width="14.8" height="2.8" fill="#c5d6ea" stroke="#3d78b6" stroke-width="1.2"/><rect x="333" y="918.6" width="16" height="1.1" fill="#e8737f"/></g>
<rect x="71" y="926" width="879" height="19" fill="#ffffff" />
<rect x="71" y="926" width="879" height="1" fill="#d6d6d6" />
<rect x="71" y="945" width="879" height="1" fill="#d6d6d6" />
<rect x="71" y="926" width="1" height="19" fill="#d6d6d6" />
<g shape-rendering="geometricPrecision"><path d="M338.7,928.7 H342.5 V932.8 L344.6,933.2 L345.5,934.6 V939.6 L344.6,941 H340 L337.3,938.2 L334.7,936 L335.7,934.7 H338.7 Z" fill="#fff" stroke="#3b7dc9" stroke-width="1.15" stroke-linejoin="round"/><path d="M340.6,929 V930.2" stroke="#3b7dc9" stroke-width="0.9"/></g>
<rect x="338" y="941" width="8" height="3" fill="#767676" />
<rect x="71" y="945" width="879" height="31" fill="#ffffff" />
<rect x="71" y="945" width="879" height="1" fill="#d6d6d6" />
<rect x="71" y="976" width="879" height="1" fill="#d6d6d6" />
<rect x="71" y="945" width="1" height="31" fill="#d6d6d6" />
<g shape-rendering="geometricPrecision"><path d="M335.6,955.6 H346.4 V963.5 L343.5,966.4 H335.6 Z" fill="#fff" stroke="#ecc36d" stroke-width="1.1"/><path d="M343.5,966.4 V963.5 H346.4" fill="none" stroke="#ecc36d" stroke-width="1.1"/><path d="M337,957.5 H340.8 M342,957.5 H344.8 M337,959.5 H338.8 M340,959.5 H341.8 M343,959.5 H344.8 M337,961.5 H338.5 M340,961.5 H343.5 M337,963.5 H337.8 M339,963.5 H341.3" stroke="#6a6a6a" stroke-width="0.9"/></g>
<rect x="57" y="976" width="893" height="19" fill="#ddeffc" />
<rect x="57" y="976" width="893" height="1" fill="#d6d6d6" />
<rect x="57" y="995" width="893" height="1" fill="#d6d6d6" />
<rect x="57" y="976" width="1" height="19" fill="#d6d6d6" />
<rect x="71" y="995" width="879" height="19" fill="#ffffff" />
<rect x="71" y="995" width="879" height="1" fill="#d6d6d6" />
<rect x="71" y="1014" width="879" height="1" fill="#d6d6d6" />
<rect x="71" y="995" width="1" height="19" fill="#d6d6d6" />
<g shape-rendering="geometricPrecision"><path d="M334.6,998.6 H347.4 V1006.6 H341.8 V1011.4 H334.6 Z" fill="#c5d6ea" stroke="#3d78b6" stroke-width="1.2"/></g>
<rect x="71" y="1014" width="879" height="19" fill="#ffffff" />
<rect x="71" y="1014" width="879" height="1" fill="#d6d6d6" />
<rect x="71" y="1033" width="879" height="1" fill="#d6d6d6" />
<rect x="71" y="1014" width="1" height="19" fill="#d6d6d6" />
<g shape-rendering="geometricPrecision"><path d="M334,1023 L344,1018 L348,1020 L338,1025 Z" fill="#a9c9ec"/><path d="M334,1023 L338,1025 L338,1031 L334,1029 Z" fill="#c8dcf2"/><path d="M338,1025 L348,1020 L348,1026 L338,1031 Z" fill="#79ade5"/></g>
<rect x="71" y="1033" width="879" height="19" fill="#ffffff" />
<rect x="71" y="1033" width="879" height="1" fill="#d6d6d6" />
<rect x="71" y="1052" width="879" height="1" fill="#d6d6d6" />
<rect x="71" y="1033" width="1" height="19" fill="#d6d6d6" />
<g shape-rendering="geometricPrecision"><path d="M334,1038.5 L341,1035 L348,1038.8 L341,1042.3 Z" fill="#c3d6ec"/><path d="M334,1038.5 L341,1042.3 L341,1050 L334,1046 Z" fill="#e1e4e9"/><path d="M341,1042.3 L348,1038.8 L348,1046 L341,1050 Z" fill="#4a82be"/></g>
<rect x="71" y="1052" width="879" height="19" fill="#ffffff" />
<rect x="71" y="1052" width="879" height="1" fill="#d6d6d6" />
<rect x="71" y="1071" width="879" height="1" fill="#d6d6d6" />
<rect x="71" y="1052" width="1" height="19" fill="#d6d6d6" />
<g shape-rendering="geometricPrecision"><rect x="333.6" y="1060.6" width="14.8" height="2.8" fill="#c5d6ea" stroke="#3d78b6" stroke-width="1.2"/><rect x="333" y="1063.6" width="16" height="1.1" fill="#e8737f"/></g>
<rect x="71" y="1071" width="879" height="19" fill="#ffffff" />
<rect x="71" y="1071" width="879" height="1" fill="#d6d6d6" />
<rect x="71" y="1090" width="879" height="1" fill="#d6d6d6" />
<rect x="71" y="1071" width="1" height="19" fill="#d6d6d6" />
<g shape-rendering="geometricPrecision"><path d="M334.6,1077.3 L347.4,1074.3 V1084.5 L334.6,1087.5 Z" fill="#c5d6ea" stroke="#3d78b6" stroke-width="1.2"/><path d="M338.6,1079.2 L343.4,1078.5 V1082.8 L338.6,1083.5 Z" fill="#fff" stroke="#3d78b6" stroke-width="1.1"/></g>
<rect x="71" y="1090" width="879" height="19" fill="#ffffff" />
<rect x="71" y="1090" width="879" height="1" fill="#d6d6d6" />
<rect x="71" y="1109" width="879" height="1" fill="#d6d6d6" />
<rect x="71" y="1090" width="1" height="19" fill="#d6d6d6" />
<g shape-rendering="geometricPrecision"><path d="M334.6,1096.3 L347.4,1093.3 V1103.5 L334.6,1106.5 Z" fill="#c5d6ea" stroke="#3d78b6" stroke-width="1.2"/><path d="M338.6,1098.2 L343.4,1097.5 V1101.8 L338.6,1102.5 Z" fill="#fff" stroke="#3d78b6" stroke-width="1.1"/></g>
<rect x="57" y="1109" width="893" height="12" fill="#ddeffc" />
<rect x="57" y="1109" width="893" height="1" fill="#d6d6d6" />
<rect x="57" y="1109" width="1" height="12" fill="#d6d6d6" />
<rect x="255" y="230" width="1" height="891" fill="#d6d6d6" />
<rect x="330" y="230" width="1" height="891" fill="#d6d6d6" />
<rect x="500" y="230" width="1" height="891" fill="#d6d6d6" />
<rect x="610" y="230" width="1" height="891" fill="#d6d6d6" />
<rect x="780" y="230" width="1" height="891" fill="#d6d6d6" />
<g shape-rendering="geometricPrecision"><path d="M54,238 V244 H48 Z" fill="#5a5a5a"/></g>
<g shape-rendering="geometricPrecision"><path d="M54,352 V358 H48 Z" fill="#5a5a5a"/></g>
<g shape-rendering="geometricPrecision"><path d="M54,447 V453 H48 Z" fill="#5a5a5a"/></g>
<g shape-rendering="geometricPrecision"><path d="M54,649 V655 H48 Z" fill="#5a5a5a"/></g>
<g shape-rendering="geometricPrecision"><path d="M54,763 V769 H48 Z" fill="#5a5a5a"/></g>
<g shape-rendering="geometricPrecision"><path d="M68,782 V788 H62 Z" fill="#5a5a5a"/></g>
<g shape-rendering="geometricPrecision"><path d="M54,984 V990 H48 Z" fill="#5a5a5a"/></g>
<g shape-rendering="geometricPrecision"><path d="M54,1117 V1123 H48 Z" fill="#5a5a5a"/></g>
<rect x="951" y="231" width="17" height="890" fill="#e9e9e9" />
<rect x="951" y="248" width="17" height="726" fill="#c8c8c8" />
<rect x="950" y="230" width="1" height="891" fill="#d6d6d6" />
<g shape-rendering="geometricPrecision"><path d="M956.3,241.8 L959.5,237.5 L962.7,241.8" fill="none" stroke="#6a6a6a" stroke-width="2.1"/></g>
<g shape-rendering="geometricPrecision"><path d="M956.3,1110.5 L959.5,1114.8 L962.7,1110.5" fill="none" stroke="#6a6a6a" stroke-width="2.1"/></g>
<rect x="12" y="210" width="1" height="912" fill="#a8a8a8" />
<rect x="968" y="210" width="1" height="912" fill="#a8a8a8" />
<rect x="967" y="210" width="1" height="20" fill="#a8a8a8" />
<rect x="12" y="1121" width="957" height="1" fill="#a8a8a8" />
<g shape-rendering="geometricPrecision"><path d="M972.8,662.5 L976.8,665.7 L972.8,669" fill="none" stroke="#5f5f5f" stroke-width="1.7"/></g>
<rect x="981" y="212" width="1" height="910" fill="#a8a8a8" />
<rect x="981" y="212" width="96" height="1" fill="#a8a8a8" />
<rect x="1076" y="212" width="1" height="25" fill="#a8a8a8" />
<rect x="1076" y="236" width="832" height="1" fill="#a8a8a8" />
<rect x="1907" y="236" width="1" height="886" fill="#a8a8a8" />
<rect x="981" y="1121" width="927" height="1" fill="#a8a8a8" />
<rect x="994" y="219" width="7" height="3" fill="#e8788e" />
<rect x="1002" y="219" width="6" height="3" fill="#e8788e" />
<rect x="994" y="223" width="2" height="3" fill="#e8788e" />
<rect x="998" y="223" width="7" height="3" fill="#e8788e" />
<rect x="1006" y="223" width="2" height="3" fill="#e8788e" />
<rect x="994" y="227" width="6" height="3" fill="#e8788e" />
<rect x="1001" y="227" width="7" height="3" fill="#e8788e" />
<g shape-rendering="geometricPrecision"><rect x="1884.7" y="217.7" width="12.6" height="10.6" fill="#f6f6f6" stroke="#7a7a7a" stroke-width="1.2"/><rect x="1884.5" y="217.4" width="13" height="2.6" fill="#7a7a7a"/><rect x="1884.5" y="223.2" width="13" height="1.6" fill="#9a9a9a"/></g>
<g shape-rendering="geometricPrecision"><rect x="993.6" y="250" width="10.4" height="3.8" fill="#a9a9a9"/><path d="M994.2,253.8 V258 H996.5" fill="none" stroke="#c2c2c2" stroke-width="0.9"/><rect x="998.2" y="256.3" width="10.2" height="3.3" fill="#e2e2e2" stroke="#c2c2c2" stroke-width="0.9"/></g>
<g shape-rendering="geometricPrecision"><rect x="1019.2" y="250" width="10.4" height="3.8" fill="#a9a9a9"/><path d="M1030,251.6 H1034.5 V255.8" fill="none" stroke="#c2c2c2" stroke-width="0.9"/><rect x="1024" y="256.3" width="10.4" height="3.3" fill="#e2e2e2" stroke="#c2c2c2" stroke-width="0.9"/></g>
<rect x="1043" y="246" width="1" height="18" fill="#c8c8c8" />
<g shape-rendering="geometricPrecision"><rect x="1053" y="249" width="13.3" height="1.6" fill="#a8a8a8"/><rect x="1053" y="258.4" width="13.3" height="1.6" fill="#a8a8a8"/><path d="M1059,252.8 H1066.3 M1059,254.5 H1066.3 M1059,256.2 H1066.3" stroke="#a8a8a8" stroke-width="1"/><path d="M1058.3,254.5 H1053.8 M1056,252.3 L1053.8,254.5 L1056,256.7" fill="none" stroke="#b8b8b8" stroke-width="1.3"/></g>
<g shape-rendering="geometricPrecision"><rect x="1079" y="249" width="13.3" height="1.6" fill="#a8a8a8"/><rect x="1079" y="258.4" width="13.3" height="1.6" fill="#a8a8a8"/><path d="M1085,252.8 H1092.3 M1085,254.5 H1092.3 M1085,256.2 H1092.3" stroke="#a8a8a8" stroke-width="1"/><path d="M1079,254.5 H1083.5 M1081.3,252.3 L1083.5,254.5 L1081.3,256.7" fill="none" stroke="#b8b8b8" stroke-width="1.3"/></g>
<rect x="1102" y="246" width="1" height="18" fill="#c8c8c8" />
<g shape-rendering="geometricPrecision"><path d="M1111.8,251.4 H1115 M1113.4,249.8 V253" stroke="#b4b4b4" stroke-width="1.3"/><rect x="1116.2" y="250.1" width="10.6" height="2.6" fill="#d8d8d8" stroke="#b4b4b4" stroke-width="0.8"/><path d="M1121.5,250.1 V252.7" stroke="#b4b4b4" stroke-width="0.6"/><rect x="1111.6" y="255.4" width="10.6" height="4.4" fill="none" stroke="#c4c4c4" stroke-width="0.9"/><path d="M1111.6,257.6 H1122.2 M1116.9,255.4 V259.8" stroke="#c4c4c4" stroke-width="0.8"/></g>
<g shape-rendering="geometricPrecision"><rect x="1137.9" y="250.3" width="10.4" height="4.3" fill="none" stroke="#c4c4c4" stroke-width="0.9"/><path d="M1137.9,252.5 H1148.3 M1143.1,250.3 V254.6" stroke="#c4c4c4" stroke-width="0.8"/><path d="M1138.2,258.4 H1141.4 M1139.8,256.8 V260" stroke="#b4b4b4" stroke-width="1.3"/><rect x="1142.6" y="257.2" width="10.3" height="2.6" fill="#d8d8d8" stroke="#b4b4b4" stroke-width="0.8"/><path d="M1147.8,257.2 V259.8" stroke="#b4b4b4" stroke-width="0.6"/></g>
<rect x="988" y="290" width="912" height="824" fill="#ffffff" />
<rect x="988" y="290" width="912" height="20" fill="#f0f0f0" />
<rect x="1018" y="290" width="1" height="20" fill="#a8a8a8" />
<rect x="1294" y="290" width="1" height="20" fill="#a8a8a8" />
<rect x="1329" y="290" width="1" height="20" fill="#a8a8a8" />
<rect x="1399" y="290" width="1" height="20" fill="#a8a8a8" />
<rect x="1499" y="290" width="1" height="20" fill="#a8a8a8" />
<rect x="1569" y="290" width="1" height="20" fill="#a8a8a8" />
<rect x="1669" y="290" width="1" height="20" fill="#a8a8a8" />
<rect x="1769" y="290" width="1" height="20" fill="#a8a8a8" />
<rect x="988" y="290" width="912" height="1" fill="#a8a8a8" />
<rect x="988" y="310" width="912" height="1" fill="#a8a8a8" />
<rect x="989" y="311" width="29" height="94" fill="#f0f0f0" />
<rect x="1018" y="310" width="1" height="95" fill="#a8a8a8" />
<rect x="1033" y="329" width="867" height="1" fill="#d6d6d6" />
<rect x="1033" y="348" width="867" height="1" fill="#d6d6d6" />
<rect x="1033" y="367" width="867" height="1" fill="#d6d6d6" />
<rect x="1033" y="386" width="867" height="1" fill="#d6d6d6" />
<rect x="1033" y="405" width="867" height="1" fill="#d6d6d6" />
<rect x="1033" y="310" width="1" height="95" fill="#d6d6d6" />
<rect x="1294" y="310" width="1" height="95" fill="#d6d6d6" />
<rect x="1329" y="310" width="1" height="95" fill="#d6d6d6" />
<rect x="1399" y="310" width="1" height="95" fill="#d6d6d6" />
<rect x="1499" y="310" width="1" height="95" fill="#d6d6d6" />
<rect x="1569" y="310" width="1" height="95" fill="#d6d6d6" />
<rect x="1669" y="310" width="1" height="95" fill="#d6d6d6" />
<rect x="1769" y="310" width="1" height="95" fill="#d6d6d6" />
<rect x="1899" y="290" width="1" height="115" fill="#a8a8a8" />
<rect x="1900" y="290" width="1" height="825" fill="#a8a8a8" />
<rect x="989" y="1085" width="911" height="29" fill="#f0f0f0" />
<rect x="988" y="1084" width="912" height="1" fill="#a8a8a8" />
<rect x="988" y="290" width="912" height="1" fill="#a8a8a8" />
<rect x="988" y="1114" width="912" height="1" fill="#a8a8a8" />
<rect x="988" y="290" width="1" height="825" fill="#a8a8a8" />
<rect x="1899" y="290" width="1" height="825" fill="#a8a8a8" />
<rect x="1771" y="1088" width="127" height="1" fill="#a8a8a8" />
<rect x="1771" y="1110" width="127" height="1" fill="#a8a8a8" />
<rect x="1771" y="1088" width="1" height="23" fill="#a8a8a8" />
<rect x="1897" y="1088" width="1" height="23" fill="#a8a8a8" />
<rect x="1772" y="1089" width="125" height="21" fill="#ffffff" />
<rect x="0" y="1160" width="1920" height="1" fill="#000000" />
</svg>
<div class="t" style="top:6px;left:923px;color:#ffffff;">Price List - PL1</div>
<div class="t" style="top:37px;left:17px;color:#ffffff;">Price List</div>
<div class="t" style="top:38px;left:94px;">Home</div>
<div class="t" style="top:38px;left:147px;color:#ffffff;">Data</div>
<div class="t" style="top:61px;left:31px;color:#a6a6a6;">Undo</div>
<div class="t" style="top:84px;left:31px;color:#a6a6a6;">Redo</div>
<div class="t" style="top:107px;left:31px;">Delete</div>
<div class="t" style="top:96px;left:80px;">Adjust</div>
<div class="t" style="top:109px;left:76px;">Rates</div>
<div class="t" style="top:96px;left:140px;">Price</div>
<div class="t" style="top:109px;left:141px;">Lists</div>
<div class="t" style="top:69px;left:203px;">Templates</div>
<div class="t" style="top:99px;left:202px;">Excel</div>
<div class="t" style="top:130px;left:54px;">Edit</div>
<div class="t" style="top:130px;left:179px;">Insert</div>
<div class="t" style="top:155px;left:13px;color:#ffffff;">Price Items</div>
<div class="t" style="top:214px;left:46px;">Description</div>
<div class="t" style="top:214px;left:259px;">Code</div>
<div class="t" style="top:214px;left:334px;">Result</div>
<div class="t" style="top:214px;left:504px;">Unit</div>
<div class="t" style="top:214px;left:614px;">Rate</div>
<div class="t" style="top:214px;left:784px;">Markup</div>
<div class="t" style="top:235px;left:21px;width:13px;overflow:hidden;">1</div>
<div class="t" style="top:233px;left:62px;">Concrete</div>
<div class="t" style="top:254px;left:21px;width:13px;overflow:hidden;">1.1</div>
<div class="t" style="top:252px;left:76px;">Trim and grade under slab</div>
<div class="t" style="top:253px;left:354px;">Area</div>
<div class="t" style="top:253px;left:504px;">m2</div>
<div class="t" style="top:253px;right:1144px;text-align:right;">600.00</div>
<div class="t" style="top:253px;left:930px;letter-spacing:0.9px;">0%</div>
<div class="t" style="top:273px;left:21px;width:13px;overflow:hidden;">1.2</div>
<div class="t" style="top:271px;left:76px;">Exc Strip footings</div>
<div class="t" style="top:272px;left:354px;">Volume by length</div>
<div class="t" style="top:272px;left:504px;">m3</div>
<div class="t" style="top:272px;right:1144px;text-align:right;">95.00</div>
<div class="t" style="top:272px;left:930px;letter-spacing:0.9px;">0%</div>
<div class="t" style="top:292px;left:21px;width:13px;overflow:hidden;">1.3</div>
<div class="t" style="top:290px;left:76px;">125 mm Slab on ground</div>
<div class="t" style="top:291px;left:354px;">Volume</div>
<div class="t" style="top:291px;left:504px;">m3</div>
<div class="t" style="top:291px;right:1144px;text-align:right;color:#0000ff;">270.00</div>
<div class="t" style="top:291px;left:930px;letter-spacing:0.9px;">0%</div>
<div class="t" style="top:311px;left:21px;width:13px;overflow:hidden;">1.4</div>
<div class="t" style="top:309px;left:76px;">125 mm Edge form to slab</div>
<div class="t" style="top:310px;left:354px;">Length</div>
<div class="t" style="top:310px;left:504px;">m</div>
<div class="t" style="top:310px;right:1144px;text-align:right;">68.00</div>
<div class="t" style="top:310px;left:930px;letter-spacing:0.9px;">0%</div>
<div class="t" style="top:330px;left:21px;width:13px;overflow:hidden;">1.5</div>
<div class="t" style="top:328px;left:76px;">F11 TM 4 Bar</div>
<div class="t" style="top:329px;left:354px;">Length</div>
<div class="t" style="top:329px;left:504px;">m</div>
<div class="t" style="top:329px;right:1144px;text-align:right;">13.00</div>
<div class="t" style="top:329px;left:930px;letter-spacing:0.9px;">0%</div>
<div class="t" style="top:349px;left:21px;width:13px;overflow:hidden;">2</div>
<div class="t" style="top:347px;left:62px;">Brickwork</div>
<div class="t" style="top:368px;left:21px;width:13px;overflow:hidden;">2.1</div>
<div class="t" style="top:366px;left:76px;">Common Bricks to ext walls</div>
<div class="t" style="top:367px;left:354px;">Vertical area less openings</div>
<div class="t" style="top:367px;left:504px;">m2</div>
<div class="t" style="top:367px;right:1144px;text-align:right;">95.00</div>
<div class="t" style="top:367px;left:930px;letter-spacing:0.9px;">0%</div>
<div class="t" style="top:387px;left:21px;width:13px;overflow:hidden;">2.2</div>
<div class="t" style="top:385px;left:76px;">E/o for Face brickwork</div>
<div class="t" style="top:386px;left:354px;">Vertical area less openings</div>
<div class="t" style="top:386px;left:504px;">m2</div>
<div class="t" style="top:386px;right:1144px;text-align:right;">22.00</div>
<div class="t" style="top:386px;left:930px;letter-spacing:0.9px;">0%</div>
<div class="t" style="top:406px;left:21px;width:13px;overflow:hidden;">2.3</div>
<div class="t" style="top:404px;left:76px;">Expanion joints</div>
<div class="t" style="top:405px;left:354px;">Length</div>
<div class="t" style="top:405px;left:504px;">m</div>
<div class="t" style="top:405px;right:1144px;text-align:right;">18.50</div>
<div class="t" style="top:405px;left:930px;letter-spacing:0.9px;">0%</div>
<div class="t" style="top:425px;left:21px;width:13px;overflow:hidden;">2.4</div>
<div class="t" style="top:423px;left:76px;">BOE Sills</div>
<div class="t" style="top:424px;left:354px;">Length</div>
<div class="t" style="top:424px;left:504px;">m</div>
<div class="t" style="top:424px;right:1144px;text-align:right;">32.50</div>
<div class="t" style="top:424px;left:930px;letter-spacing:0.9px;">0%</div>
<div class="t" style="top:444px;left:21px;width:13px;overflow:hidden;">3</div>
<div class="t" style="top:442px;left:62px;">Carpentry</div>
<div class="t" style="top:463px;left:21px;width:13px;overflow:hidden;">3.1</div>
<div class="t" style="top:461px;left:76px;">Subfloor framing and sheet flooring</div>
<div class="t" style="top:462px;left:354px;">Area</div>
<div class="t" style="top:462px;left:504px;">m2</div>
<div class="t" style="top:462px;right:1144px;text-align:right;">90.00</div>
<div class="t" style="top:462px;left:930px;letter-spacing:0.9px;">0%</div>
<div class="t" style="top:482px;left:21px;width:13px;overflow:hidden;">3.2</div>
<div class="t" style="top:480px;left:76px;">Ext wall frames</div>
<div class="t" style="top:481px;left:354px;">Vertical area</div>
<div class="t" style="top:481px;left:504px;">m2</div>
<div class="t" style="top:481px;right:1144px;text-align:right;">50.00</div>
<div class="t" style="top:481px;left:930px;letter-spacing:0.9px;">0%</div>
<div class="t" style="top:507px;left:21px;width:13px;overflow:hidden;">3.3</div>
<div class="t" style="top:499px;left:76px;">Supply and install studs to external</div>
<div class="t" style="top:512px;left:76px;">walls</div>
<div class="t" style="top:506px;left:354px;">Length</div>
<div class="t" style="top:506px;left:504px;">no</div>
<div class="t" style="top:506px;right:1144px;text-align:right;">50.00</div>
<div class="t" style="top:506px;left:930px;letter-spacing:0.9px;">0%</div>
<div class="t" style="top:532px;left:21px;width:13px;overflow:hidden;">3.4</div>
<div class="t" style="top:530px;left:76px;">Internal wall frames</div>
<div class="t" style="top:531px;left:354px;">Vertical area less openings</div>
<div class="t" style="top:531px;left:504px;">m2</div>
<div class="t" style="top:531px;right:1144px;text-align:right;">36.00</div>
<div class="t" style="top:531px;left:930px;letter-spacing:0.9px;">0%</div>
<div class="t" style="top:551px;left:21px;width:13px;overflow:hidden;">3.5</div>
<div class="t" style="top:549px;left:76px;">1st floor frame and sheet floor</div>
<div class="t" style="top:550px;left:354px;">Area</div>
<div class="t" style="top:550px;left:504px;">m2</div>
<div class="t" style="top:550px;right:1144px;text-align:right;">125.00</div>
<div class="t" style="top:550px;left:930px;letter-spacing:0.9px;">0%</div>
<div class="t" style="top:570px;left:21px;width:13px;overflow:hidden;">3.6</div>
<div class="t" style="top:568px;left:76px;">Roof truss frame</div>
<div class="t" style="top:569px;left:354px;">Area</div>
<div class="t" style="top:569px;left:504px;">m2</div>
<div class="t" style="top:569px;right:1144px;text-align:right;">230.00</div>
<div class="t" style="top:569px;left:930px;letter-spacing:0.9px;">0%</div>
<div class="t" style="top:589px;left:21px;width:13px;overflow:hidden;">3.7</div>
<div class="t" style="top:587px;left:76px;">Fasica and eaves</div>
<div class="t" style="top:588px;left:354px;">Length</div>
<div class="t" style="top:588px;left:504px;">m</div>
<div class="t" style="top:588px;right:1144px;text-align:right;">60.00</div>
<div class="t" style="top:588px;left:930px;letter-spacing:0.9px;">0%</div>
<div class="t" style="top:608px;left:21px;width:13px;overflow:hidden;">3.8</div>
<div class="t" style="top:606px;left:76px;">2040 x 820 timber door</div>
<div class="t" style="top:607px;left:354px;">Count</div>
<div class="t" style="top:607px;left:504px;">each</div>
<div class="t" style="top:607px;right:1144px;text-align:right;color:#0000ff;">218.80</div>
<div class="t" style="top:607px;left:930px;letter-spacing:0.9px;">0%</div>
<div class="t" style="top:627px;left:21px;width:13px;overflow:hidden;">3.9</div>
<div class="t" style="top:625px;left:76px;">2040 x 720 timber door</div>
<div class="t" style="top:626px;left:354px;">Count</div>
<div class="t" style="top:626px;left:504px;">each</div>
<div class="t" style="top:626px;right:1144px;text-align:right;color:#0000ff;">176.30</div>
<div class="t" style="top:626px;left:930px;letter-spacing:0.9px;">0%</div>
<div class="t" style="top:646px;left:21px;width:13px;overflow:hidden;">4</div>
<div class="t" style="top:644px;left:62px;">Plaster</div>
<div class="t" style="top:665px;left:21px;width:13px;overflow:hidden;">4.1</div>
<div class="t" style="top:663px;left:76px;">10 mm Plaster to walls</div>
<div class="t" style="top:664px;left:354px;">Vertical area</div>
<div class="t" style="top:664px;left:504px;">m2</div>
<div class="t" style="top:664px;right:1144px;text-align:right;color:#0000ff;">53.00</div>
<div class="t" style="top:664px;left:930px;letter-spacing:0.9px;">0%</div>
<div class="t" style="top:684px;left:21px;width:13px;overflow:hidden;">4.2</div>
<div class="t" style="top:682px;left:76px;">R 2.5 Batts to Ext wall</div>
<div class="t" style="top:683px;left:354px;">Vertical area</div>
<div class="t" style="top:683px;left:504px;">m2</div>
<div class="t" style="top:683px;right:1144px;text-align:right;">45.00</div>
<div class="t" style="top:683px;left:930px;letter-spacing:0.9px;">0%</div>
<div class="t" style="top:703px;left:21px;width:13px;overflow:hidden;">4.3</div>
<div class="t" style="top:701px;left:76px;">10 mm super ceil on battens</div>
<div class="t" style="top:702px;left:354px;">Area</div>
<div class="t" style="top:702px;left:504px;">m2</div>
<div class="t" style="top:702px;right:1144px;text-align:right;">30.00</div>
<div class="t" style="top:702px;left:930px;letter-spacing:0.9px;">0%</div>
<div class="t" style="top:722px;left:21px;width:13px;overflow:hidden;">4.4</div>
<div class="t" style="top:720px;left:76px;">6 mm villa board to wet areas</div>
<div class="t" style="top:721px;left:354px;">Vertical area less openings</div>
<div class="t" style="top:721px;left:504px;">m2</div>
<div class="t" style="top:721px;right:1144px;text-align:right;">22.00</div>
<div class="t" style="top:721px;left:930px;letter-spacing:0.9px;">0%</div>
<div class="t" style="top:741px;left:21px;width:13px;overflow:hidden;">4.5</div>
<div class="t" style="top:739px;left:76px;">Coved Cornice</div>
<div class="t" style="top:740px;left:354px;">Length</div>
<div class="t" style="top:740px;left:504px;">m</div>
<div class="t" style="top:740px;right:1144px;text-align:right;">11.50</div>
<div class="t" style="top:740px;left:930px;letter-spacing:0.9px;">0%</div>
<div class="t" style="top:760px;left:21px;width:13px;overflow:hidden;">5</div>
<div class="t" style="top:758px;left:62px;">Tiler</div>
<div class="t" style="top:779px;left:21px;width:13px;overflow:hidden;">5.1</div>
<div class="t" style="top:777px;left:76px;">Wall Tiles</div>
<div class="t" style="top:798px;left:21px;width:13px;overflow:hidden;">5.1</div>
<div class="t" style="top:796px;left:90px;">Red Tiles</div>
<div class="t" style="top:797px;left:354px;">Vertical area less openings</div>
<div class="t" style="top:797px;left:504px;">m2</div>
<div class="t" style="top:797px;right:1144px;text-align:right;">65.00</div>
<div class="t" style="top:797px;left:930px;letter-spacing:0.9px;">0%</div>
<div class="t" style="top:817px;left:21px;width:13px;overflow:hidden;">5.1</div>
<div class="t" style="top:815px;left:90px;">Green Tiles</div>
<div class="t" style="top:816px;left:354px;">Vertical area less openings</div>
<div class="t" style="top:816px;left:504px;">m2</div>
<div class="t" style="top:816px;right:1144px;text-align:right;">86.50</div>
<div class="t" style="top:816px;left:930px;letter-spacing:0.9px;">0%</div>
<div class="t" style="top:836px;left:21px;width:13px;overflow:hidden;">5.1</div>
<div class="t" style="top:834px;left:90px;">Blue Tiles</div>
<div class="t" style="top:835px;left:354px;">Vertical area less openings</div>
<div class="t" style="top:835px;left:504px;">m2</div>
<div class="t" style="top:835px;right:1144px;text-align:right;">107.00</div>
<div class="t" style="top:835px;left:930px;letter-spacing:0.9px;">0%</div>
<div class="t" style="top:855px;left:21px;width:13px;overflow:hidden;">5.2</div>
<div class="t" style="top:853px;left:76px;">150 mm High skirting tiles</div>
<div class="t" style="top:854px;left:354px;">Length</div>
<div class="t" style="top:854px;left:504px;">m</div>
<div class="t" style="top:854px;right:1144px;text-align:right;">21.00</div>
<div class="t" style="top:854px;left:930px;letter-spacing:0.9px;">0%</div>
<div class="t" style="top:874px;left:21px;width:13px;overflow:hidden;">5.3</div>
<div class="t" style="top:872px;left:76px;">Ceramic Floor tiles</div>
<div class="t" style="top:873px;left:354px;">Area</div>
<div class="t" style="top:873px;left:504px;">m2</div>
<div class="t" style="top:873px;right:1144px;text-align:right;">90.00</div>
<div class="t" style="top:873px;left:930px;letter-spacing:0.9px;">0%</div>
<div class="t" style="top:893px;left:21px;width:13px;overflow:hidden;">5.4</div>
<div class="t" style="top:891px;left:76px;">Tanking to ditto</div>
<div class="t" style="top:892px;left:354px;">Area</div>
<div class="t" style="top:892px;left:504px;">m2</div>
<div class="t" style="top:892px;right:1144px;text-align:right;">22.50</div>
<div class="t" style="top:892px;left:930px;letter-spacing:0.9px;">0%</div>
<div class="t" style="top:912px;left:21px;width:13px;overflow:hidden;">5.5</div>
<div class="t" style="top:910px;left:76px;">Brass edge strips</div>
<div class="t" style="top:911px;left:354px;">Length</div>
<div class="t" style="top:911px;left:504px;">m</div>
<div class="t" style="top:911px;right:1144px;text-align:right;">12.00</div>
<div class="t" style="top:911px;left:930px;letter-spacing:0.9px;">0%</div>
<div class="t" style="top:931px;left:21px;width:13px;overflow:hidden;">5.6</div>
<div class="t" style="top:929px;left:76px;">Prepare shower bases</div>
<div class="t" style="top:930px;left:354px;">Count</div>
<div class="t" style="top:930px;left:504px;">each</div>
<div class="t" style="top:930px;right:1144px;text-align:right;">120.00</div>
<div class="t" style="top:930px;left:930px;letter-spacing:0.9px;">0%</div>
<div class="t" style="top:956px;left:21px;width:13px;overflow:hidden;">5.7</div>
<div class="t" style="top:948px;left:76px;">Please ensure all areas are cleaned</div>
<div class="t" style="top:961px;left:76px;">for next trade</div>
<div class="t" style="top:955px;left:354px;">Note</div>
<div class="t" style="top:955px;left:930px;letter-spacing:0.9px;">0%</div>
<div class="t" style="top:981px;left:21px;width:13px;overflow:hidden;">6</div>
<div class="t" style="top:979px;left:62px;">Small Garage</div>
<div class="t" style="top:1000px;left:21px;width:13px;overflow:hidden;">6.1</div>
<div class="t" style="top:998px;left:76px;">Trim and grade under slab</div>
<div class="t" style="top:999px;left:354px;">Area</div>
<div class="t" style="top:999px;left:504px;">m2</div>
<div class="t" style="top:999px;right:1144px;text-align:right;">3.00</div>
<div class="t" style="top:999px;left:930px;letter-spacing:0.9px;">0%</div>
<div class="t" style="top:1019px;left:21px;width:13px;overflow:hidden;">6.2</div>
<div class="t" style="top:1017px;left:76px;">Exc Strip footings</div>
<div class="t" style="top:1018px;left:354px;">Volume by length</div>
<div class="t" style="top:1018px;left:504px;">m3</div>
<div class="t" style="top:1018px;right:1144px;text-align:right;">95.00</div>
<div class="t" style="top:1018px;left:930px;letter-spacing:0.9px;">0%</div>
<div class="t" style="top:1038px;left:21px;width:13px;overflow:hidden;">6.3</div>
<div class="t" style="top:1036px;left:76px;">125 mm Slab on ground</div>
<div class="t" style="top:1037px;left:354px;">Volume</div>
<div class="t" style="top:1037px;left:504px;">m3</div>
<div class="t" style="top:1037px;right:1144px;text-align:right;color:#0000ff;">270.00</div>
<div class="t" style="top:1037px;left:930px;letter-spacing:0.9px;">0%</div>
<div class="t" style="top:1057px;left:21px;width:13px;overflow:hidden;">6.4</div>
<div class="t" style="top:1055px;left:76px;">125 mm Edge form to slab</div>
<div class="t" style="top:1056px;left:354px;">Length</div>
<div class="t" style="top:1056px;left:504px;">m</div>
<div class="t" style="top:1056px;right:1144px;text-align:right;">68.00</div>
<div class="t" style="top:1056px;left:930px;letter-spacing:0.9px;">0%</div>
<div class="t" style="top:1076px;left:21px;width:13px;overflow:hidden;">6.5</div>
<div class="t" style="top:1074px;left:76px;">Common Bricks to ext walls</div>
<div class="t" style="top:1075px;left:354px;">Vertical area less openings</div>
<div class="t" style="top:1075px;left:504px;">m2</div>
<div class="t" style="top:1075px;right:1144px;text-align:right;">95.00</div>
<div class="t" style="top:1075px;left:930px;letter-spacing:0.9px;">0%</div>
<div class="t" style="top:1095px;left:21px;width:13px;overflow:hidden;">6.6</div>
<div class="t" style="top:1093px;left:76px;">E/o for Face brickwork</div>
<div class="t" style="top:1094px;left:354px;">Vertical area less openings</div>
<div class="t" style="top:1094px;left:504px;">m2</div>
<div class="t" style="top:1094px;right:1144px;text-align:right;">22.00</div>
<div class="t" style="top:1094px;left:930px;letter-spacing:0.9px;">0%</div>
<div class="t" style="top:1114px;left:21px;width:13px;overflow:hidden;">7</div>
<div class="t" style="top:1112px;left:62px;">Large Garage</div>
<div style="position:absolute;left:12px;top:1121px;width:957px;height:9px;background:#f0f0f0;border-top:1px solid #a8a8a8;"></div>
<div class="t" style="top:218px;left:1011px;">Rate sheet</div>
<div class="t" style="top:273px;left:990px;">Plaster &gt; 10 mm Plaster to walls</div>
<div class="t" style="top:294px;left:1022px;">Description</div>
<div class="t" style="top:294px;left:1299px;">+  %</div>
<div class="t" style="top:294px;left:1333px;">No.</div>
<div class="t" style="top:294px;left:1403px;">Quantity</div>
<div class="t" style="top:294px;left:1503px;">Unit</div>
<div class="t" style="top:294px;left:1573px;">Rate</div>
<div class="t" style="top:294px;left:1673px;">Markup</div>
<div class="t" style="top:294px;left:1773px;">Total</div>
<div class="t" style="top:315px;left:997px;">1</div>
<div class="t" style="top:313px;left:1038px;">Supply</div>
<div class="t" style="top:314px;right:424px;text-align:right;">1.00</div>
<div class="t" style="top:314px;left:1503px;">m2</div>
<div class="t" style="top:314px;right:254px;text-align:right;">25.00</div>
<div class="t" style="top:314px;right:24px;text-align:right;">25.00</div>
<div class="t" style="top:334px;left:997px;">2</div>
<div class="t" style="top:332px;left:1038px;">labour</div>
<div class="t" style="top:333px;right:424px;text-align:right;">1.00</div>
<div class="t" style="top:333px;left:1503px;">m2</div>
<div class="t" style="top:333px;right:254px;text-align:right;">25.00</div>
<div class="t" style="top:333px;right:24px;text-align:right;">25.00</div>
<div class="t" style="top:353px;left:997px;">3</div>
<div class="t" style="top:351px;left:1038px;">delivery</div>
<div class="t" style="top:352px;right:424px;text-align:right;">1.00</div>
<div class="t" style="top:352px;left:1503px;">m2</div>
<div class="t" style="top:352px;right:254px;text-align:right;">2.00</div>
<div class="t" style="top:352px;right:24px;text-align:right;">2.00</div>
<div class="t" style="top:372px;left:997px;">4</div>
<div class="t" style="top:370px;left:1038px;">bucket</div>
<div class="t" style="top:371px;right:424px;text-align:right;color:#ff00ff;">0.01</div>
<div class="t" style="top:371px;left:1503px;">tube</div>
<div class="t" style="top:371px;right:254px;text-align:right;">15.00</div>
<div class="t" style="top:371px;right:24px;text-align:right;">0.15</div>
<div class="t" style="top:1094px;right:27px;text-align:right;">$52.15</div>
<div class="t" style="top:1142px;left:1827px;">Variations:</div>
<div class="t" style="top:1142px;left:1892px;">0.00</div>
</body></html>
